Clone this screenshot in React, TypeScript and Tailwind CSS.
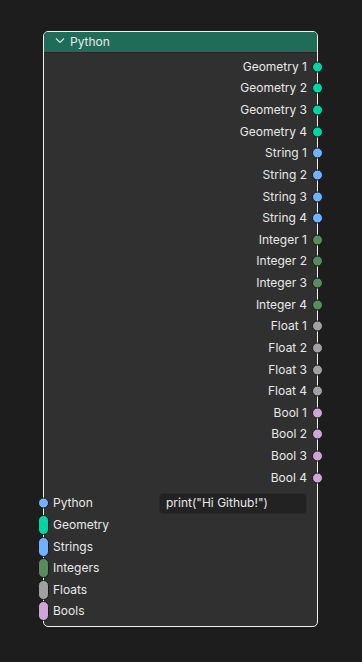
import React from "react";

const outputs: { label: string; color: string }[] = [
  ...[1, 2, 3, 4].map((n) => ({ label: `Geometry ${n}`, color: "#00d6a3" })),
  ...[1, 2, 3, 4].map((n) => ({ label: `String ${n}`, color: "#70b2ff" })),
  ...[1, 2, 3, 4].map((n) => ({ label: `Integer ${n}`, color: "#598c5c" })),
  ...[1, 2, 3, 4].map((n) => ({ label: `Float ${n}`, color: "#a1a1a1" })),
  ...[1, 2, 3, 4].map((n) => ({ label: `Bool ${n}`, color: "#cca6d6" })),
];

const multiInputs = [
  { label: "Geometry", color: "#00d6a3" },
  { label: "Strings", color: "#70b2ff" },
  { label: "Integers", color: "#598c5c" },
  { label: "Floats", color: "#a1a1a1" },
  { label: "Bools", color: "#cca6d6" },
];

function Socket({ color, tall }: { color: string; tall?: boolean }) {
  return (
    <span
      className={`block shrink-0 border border-[#1a1a1a] ${tall ? "w-[11px] h-[20px] rounded-[6px]" : "w-[11px] h-[11px] rounded-full"}`}
      style={{ backgroundColor: color }}
    />
  );
}

export default function App() {
  return (
    <div
      className="w-[362px] h-[662px] bg-[#1d1d1d] overflow-hidden pt-[31px] pl-[43px]"
      style={{ fontFamily: "Inter, 'Noto Sans', sans-serif" }}
    >
      <div className="w-[275px] rounded-[5px] border border-[#f0f0f0] bg-[#303030] text-[12px] text-[#e8e8e8]">
        {/* header */}
        <div className="h-[21px] flex items-center gap-[4px] pl-[10px] bg-[#1f6d58] rounded-t-[4px] border-b border-[#262626]">
          <svg width="12" height="12" viewBox="0 0 12 12" className="mt-[-3px]">
            <path d="M2 3.5 L6 7.5 L10 3.5" stroke="#dcdcdc" strokeWidth="1.2" fill="none" />
          </svg>
          <span>Python</span>
        </div>

        {/* outputs */}
        <div className="pt-[3px] flex flex-col">
          {outputs.map((o) => (
            <div key={o.label} className="relative h-[21.63px] flex items-center justify-end pr-[10px]">
              <span>{o.label}</span>
              <span className="absolute right-[-6px] top-1/2 -translate-y-1/2">
                <Socket color={o.color} />
              </span>
            </div>
          ))}
        </div>

        {/* inputs */}
        <div className="pt-[4px] pb-[4px] flex flex-col">
          <div className="relative h-[21.63px] flex items-center pl-[9px] pr-[10px]">
            <span className="absolute left-[-6px] top-1/2 -translate-y-1/2">
              <Socket color="#70b2ff" />
            </span>
            <span className="w-[106px]">Python</span>
            <div className="flex-1 h-[21px] rounded-[4px] bg-[#222222] border border-[#2a2a2a] flex items-center px-[6px]">
              print("Hi Github!")
            </div>
          </div>
          {multiInputs.map((i) => (
            <div key={i.label} className="relative h-[21.63px] flex items-center pl-[9px]">
              <span className="absolute left-[-6px] top-1/2 -translate-y-1/2">
                <Socket color={i.color} tall />
              </span>
              <span>{i.label}</span>
            </div>
          ))}
        </div>
      </div>
    </div>
  );
}
